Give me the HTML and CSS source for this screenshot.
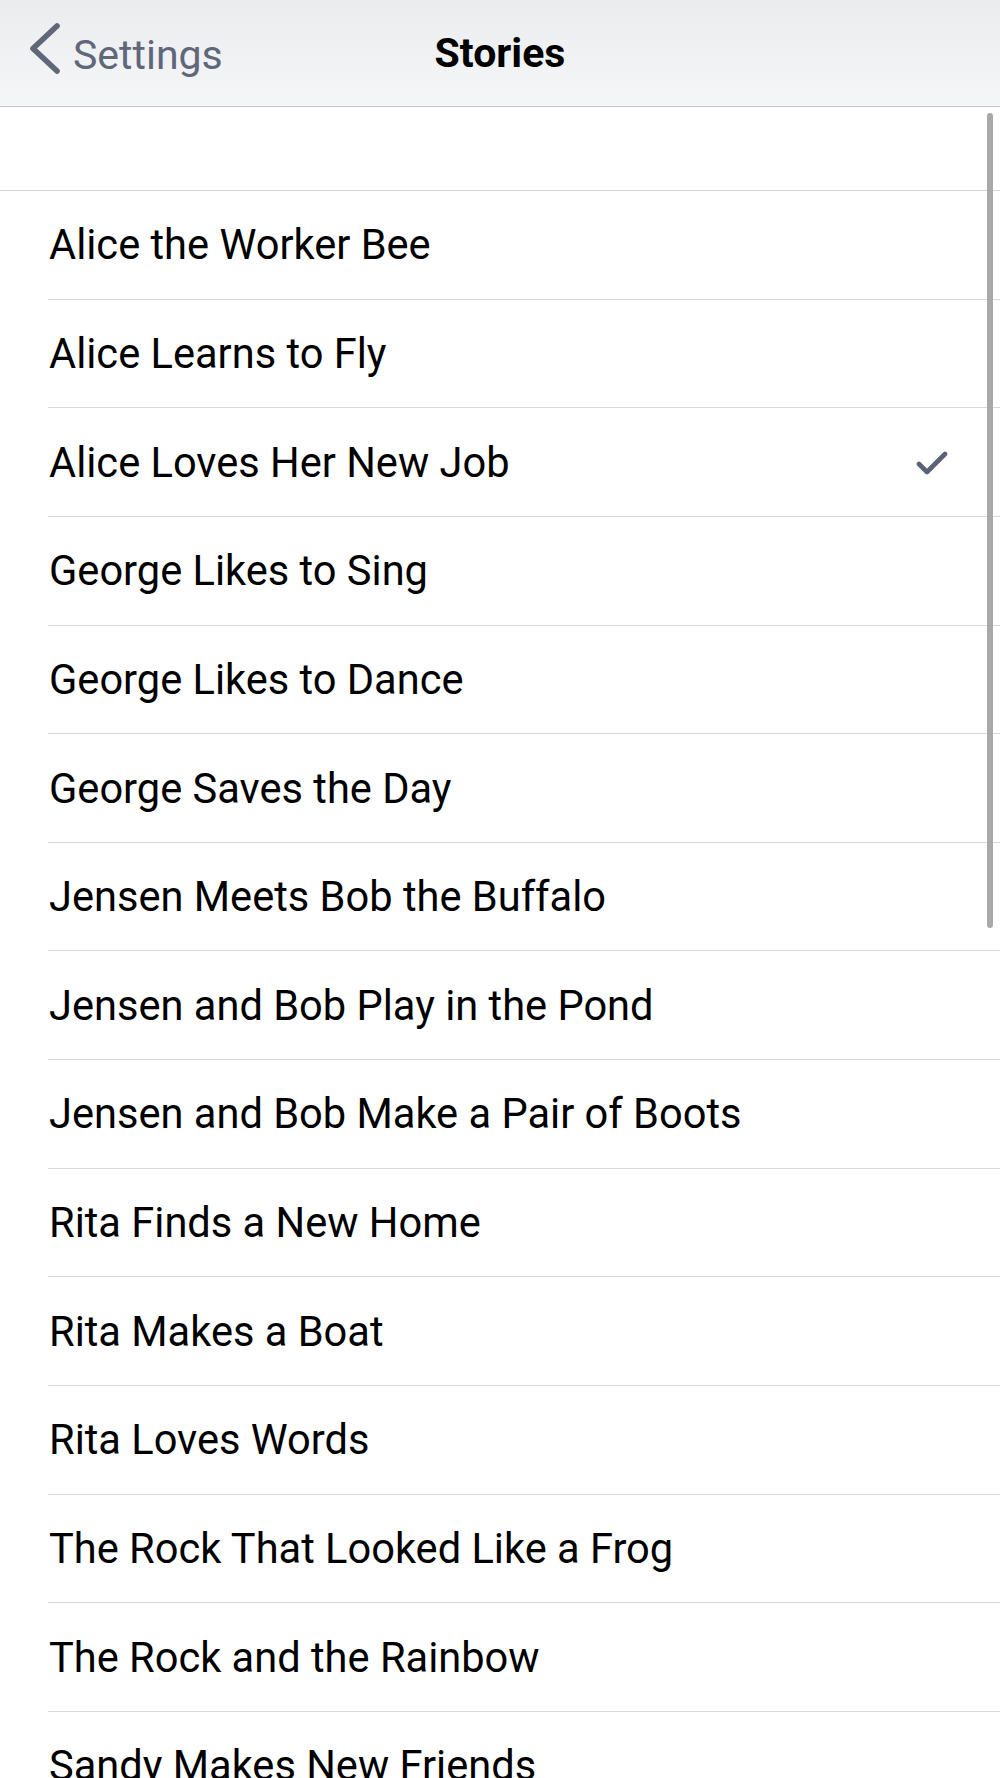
FILE: index.html
```html
<!DOCTYPE html>
<html>
<head>
<meta charset="utf-8">
<link rel="stylesheet" href="styles.css">
</head>
<body>
<div class="screen">
  <header class="navbar">
    <div class="back">
      <svg class="chev" width="40" height="60" viewBox="0 0 40 60"><polyline points="27,3 3,25.5 27,48" fill="none" stroke="#5f6779" stroke-width="5.6" stroke-linecap="round" stroke-linejoin="round"/></svg>
      <span class="back-label">Settings</span>
    </div>
    <div class="title">Stories</div>
  </header>
  <div class="spacer"></div>
  <ul class="list">
    <li class="row"><span>Alice the Worker Bee</span></li>
    <li class="row"><span>Alice Learns to Fly</span></li>
    <li class="row"><span>Alice Loves Her New Job</span><svg class="check" width="32" height="26" viewBox="0 0 32 26"><polyline points="3,14 11,22 29,4" fill="none" stroke="#5a6376" stroke-width="4.6" stroke-linecap="round" stroke-linejoin="round"/></svg></li>
    <li class="row"><span>George Likes to Sing</span></li>
    <li class="row"><span>George Likes to Dance</span></li>
    <li class="row"><span>George Saves the Day</span></li>
    <li class="row"><span>Jensen Meets Bob the Buffalo</span></li>
    <li class="row"><span>Jensen and Bob Play in the Pond</span></li>
    <li class="row"><span>Jensen and Bob Make a Pair of Boots</span></li>
    <li class="row"><span>Rita Finds a New Home</span></li>
    <li class="row"><span>Rita Makes a Boat</span></li>
    <li class="row"><span>Rita Loves Words</span></li>
    <li class="row"><span>The Rock That Looked Like a Frog</span></li>
    <li class="row"><span>The Rock and the Rainbow</span></li>
    <li class="row"><span>Sandy Makes New Friends</span></li>
  </ul>
  <div class="scrollbar"></div>
</div>
</body>
</html>
```

FILE: styles.css
```css
* { box-sizing: border-box; }
html, body { margin: 0; padding: 0; background: #fff; }
.screen {
  position: relative;
  width: 1000px;
  height: 1778px;
  overflow: hidden;
  font-family: "Roboto", "Inter", "Liberation Sans", sans-serif;
  color: #000;
}
.navbar {
  position: relative;
  height: 107px;
  background: linear-gradient(#ebecee, #f5f6f8);
  border-bottom: 1.5px solid #c9c9cd;
  display: flex;
  align-items: center;
  justify-content: center;
}
.back {
  position: absolute;
  left: 30px;
  top: 27px;
  display: flex;
  align-items: center;
  gap: 3px;
}
.chev { display: block; margin-top: -4px; }
.back-label {
  font-size: 41px;
  color: #5f6779;
  line-height: 50px;
}
.title {
  font-size: 41px;
  font-weight: 700;
  line-height: 50px;
  margin-top: -1px;
}
.spacer {
  height: 84px;
  border-bottom: 1.5px solid #d6d6d9;
}
.list {
  list-style: none;
  margin: 0;
  padding: 0 0 0 48px;
}
.row {
  height: 108.65px;
  border-bottom: 1.5px solid #d8d8db;
  display: flex;
  align-items: center;
  justify-content: space-between;
  padding-left: 1px;
  padding-right: 52px;
  font-size: 41.6px;
}
.check { display: block; margin-top: 2px; }
.scrollbar {
  position: absolute;
  left: 987px;
  top: 113px;
  width: 5.5px;
  height: 815px;
  border-radius: 3px;
  background: #a8a8a8;
}
```
